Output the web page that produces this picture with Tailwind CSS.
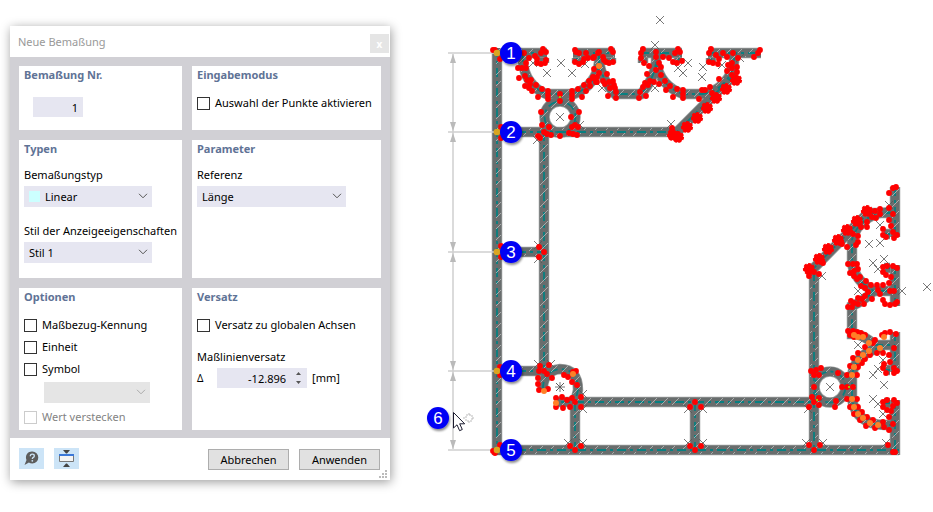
<!DOCTYPE html>
<html lang="de">
<head>
  <meta charset="UTF-8" />
  <meta name="viewport" content="width=device-width, initial-scale=1.0" />
  <title>Neue Bemaßung</title>
  <script src="https://cdn.jsdelivr.net/npm/@tailwindcss/browser@4"></script>
</head>
<body class="bg-white min-h-screen flex items-start font-['Noto_Sans','Open_Sans',sans-serif] text-[11px] leading-4 text-black">

  <!-- DIALOG -->
  <form class="w-[380px] shrink-0 ml-2.5 mt-[26px] mb-8 bg-white shadow-[1px_2px_10px_rgba(0,0,0,0.4)]">

    <header class="flex items-center justify-between h-[31px] pl-2 pr-px">
      <h1 class="text-[#999999]">Neue Bemaßung</h1>
      <button type="button" aria-label="Schließen" class="size-[19px] mt-1 bg-[#e5e5e5] text-white text-[10px] leading-4 font-bold">x</button>
    </header>

    <div class="grid grid-cols-[163fr_189fr] gap-2.5 px-[9px] pt-[9px] pb-2 bg-[#d1d0d5]">

      <section class="bg-white pt-px px-[5px] pb-[13px]">
        <h2 class="font-bold text-[#5f7396]"><label for="nr">Bemaßung Nr.</label></h2>
        <input id="nr" type="text" value="1" class="block w-[50px] h-5 mt-3.5 ml-[9px] pr-[5px] bg-[#e6e6f1] text-right" />
      </section>

      <section class="bg-white pt-px px-[5px]">
        <h2 class="font-bold text-[#5f7396]">Eingabemodus</h2>
        <label class="flex items-center gap-[5px] mt-3 whitespace-nowrap">
          <input type="checkbox" class="appearance-none size-[13px] border border-[#333333] bg-white" />
          Auswahl der Punkte aktivieren
        </label>
      </section>

      <section class="bg-white pt-px px-[5px] pb-[15px]">
        <h2 class="font-bold text-[#5f7396]">Typen</h2>
        <label for="typ" class="block mt-2.5">Bemaßungstyp</label>
        <div class="relative w-32 mt-[3px]">
          <select id="typ" class="block appearance-none w-full h-[21px] pl-[21px] bg-[#e6e6f1]"><option>Linear</option></select>
          <span class="absolute left-[5px] top-[5px] size-[11px] bg-[#ccffff]"></span>
          <svg class="absolute right-1 top-[7px] w-[10px] h-[6px] pointer-events-none" viewBox="0 0 10 6" fill="none" stroke="#555"><path d="M1 .8l4 4 4-4" /></svg>
        </div>
        <label for="stil" class="block mt-4 whitespace-nowrap">Stil der Anzeigeeigenschaften</label>
        <div class="relative w-32 mt-[3px]">
          <select id="stil" class="block appearance-none w-full h-[21px] pl-[5px] bg-[#e6e6f1]"><option>Stil 1</option></select>
          <svg class="absolute right-1 top-[7px] w-[10px] h-[6px] pointer-events-none" viewBox="0 0 10 6" fill="none" stroke="#555"><path d="M1 .8l4 4 4-4" /></svg>
        </div>
      </section>

      <section class="bg-white pt-px px-[5px]">
        <h2 class="font-bold text-[#5f7396]">Parameter</h2>
        <label for="referenz" class="block mt-2.5">Referenz</label>
        <div class="relative w-[149px] mt-[3px]">
          <select id="referenz" class="block appearance-none w-full h-[21px] pl-[5px] bg-[#e6e6f1]"><option>Länge</option></select>
          <svg class="absolute right-1 top-[7px] w-[10px] h-[6px] pointer-events-none" viewBox="0 0 10 6" fill="none" stroke="#555"><path d="M1 .8l4 4 4-4" /></svg>
        </div>
      </section>

      <section class="bg-white pt-px px-[5px] pb-[5px]">
        <h2 class="font-bold text-[#5f7396]">Optionen</h2>
        <div class="flex flex-col gap-1.5 mt-3">
          <label class="flex items-center gap-[5px]">
            <input type="checkbox" class="appearance-none size-[13px] border border-[#333333] bg-white" /> Maßbezug-Kennung
          </label>
          <label class="flex items-center gap-[5px]">
            <input type="checkbox" class="appearance-none size-[13px] border border-[#333333] bg-white" /> Einheit
          </label>
          <label class="flex items-center gap-[5px]">
            <input type="checkbox" class="appearance-none size-[13px] border border-[#333333] bg-white" /> Symbol
          </label>
        </div>
        <div class="relative w-[106px] mt-[5px] ml-5">
          <select aria-label="Symbol" disabled class="block appearance-none w-full h-[21px] bg-[#e5e5e5]"></select>
          <svg class="absolute right-1 top-[7px] w-[10px] h-[6px] pointer-events-none" viewBox="0 0 10 6" fill="none" stroke="#aaa"><path d="M1 .8l4 4 4-4" /></svg>
        </div>
        <label class="flex items-center gap-[5px] mt-1.5 text-[#838383]">
          <input type="checkbox" disabled class="appearance-none size-[13px] border border-[#cccccc] bg-white" /> Wert verstecken
        </label>
      </section>

      <section class="bg-white pt-px px-[5px]">
        <h2 class="font-bold text-[#5f7396]">Versatz</h2>
        <label class="flex items-center gap-[5px] mt-3 whitespace-nowrap">
          <input type="checkbox" class="appearance-none size-[13px] border border-[#333333] bg-white" /> Versatz zu globalen Achsen
        </label>
        <label for="versatz" class="block mt-4">Maßlinienversatz</label>
        <div class="flex items-center mt-[3px]">
          <span class="w-5 text-[10px]">Δ</span>
          <div class="relative w-[90px]">
            <input id="versatz" type="text" value="-12.896" class="block w-full h-5 pr-[21px] bg-[#e6e6f1] text-right" />
            <svg class="absolute right-1.5 top-1 w-[5px] h-3" viewBox="0 0 5 12" fill="#555"><path d="M2.500 0L5 3H0zM2.500 12L5 9H0z" /></svg>
          </div>
          <span class="ml-[5px]">[mm]</span>
        </div>
      </section>
    </div>

    <footer class="relative flex items-start h-[42px] pt-2.5 pl-[9px] pr-2.5">
      <button type="button" aria-label="Hilfe" class="flex items-center justify-center w-[25px] h-[21px] bg-[#cce4f7]">
        <svg class="w-[15px] h-[15px]" viewBox="0 0 15 15">
          <path d="M8.300.5a6 6 0 0 1 0 12q-2 0-3.400-1L.5 14l2-5A6 6 0 0 1 8.300.5z" fill="#5c5c5c" />
          <path d="M6.300 5.200q0-2 2-2t2 1.700q0 .9-1 1.500t-1 1.500" fill="none" stroke="#cce4f7" stroke-width="1.300" />
          <circle cx="8.300" cy="9.800" r=".9" fill="#cce4f7" />
        </svg>
      </button>
      <button type="button" aria-label="Dialog verkleinern" class="flex items-center justify-center w-[25px] h-[21px] ml-2.5 bg-[#cce4f7]">
        <svg class="w-[15px] h-[17px]" viewBox="0 0 15 17">
          <path d="M4 0h7L8 3.500H7zM4 17h7l-3-3.500H7z" fill="#444" />
          <path d="M.5 5.500h14v6H.5z" fill="#f4f4f4" stroke="#777" />
          <path d="M0 4h15v2H0z" fill="#3b78d8" />
        </svg>
      </button>
      <button type="button" class="w-[81px] h-[21px] mt-px ml-auto border border-[#adadad] bg-[#e1e1e1]">Abbrechen</button>
      <button type="submit" class="w-[81px] h-[21px] mt-px ml-2.5 border border-[#adadad] bg-[#e1e1e1]">Anwenden</button>
      <svg class="absolute right-[3px] bottom-0.5 w-2 h-2" viewBox="0 0 8 8" fill="#bbb">
        <path d="M6 0h2v2H6zM3 3h2v2H3zM6 3h2v2H6zM0 6h2v2H0zM3 6h2v2H3zM6 6h2v2H6z" />
      </svg>
    </footer>
  </form>

  <!-- QUERSCHNITT -->
  <svg class="flex-1 min-w-0 ml-2.5" viewBox="400 0 533 512" role="img" aria-label="Querschnitt mit Maßlinien">
    <defs>
      <pattern id="hatch" width="11" height="11" patternUnits="userSpaceOnUse">
        <path d="M1 9l8-8" stroke="#b0b3b3" stroke-width=".9" />
      </pattern>
      <marker id="x" markerUnits="userSpaceOnUse" markerWidth="10" markerHeight="10" refX="5" refY="5">
        <path d="M1 1l8 8M9 1l-8 8" stroke="#555" stroke-width=".8" />
      </marker>
      <marker id="dot" markerUnits="userSpaceOnUse" markerWidth="8" markerHeight="8" refX="4" refY="4">
        <circle cx="4" cy="4" r="2.900" fill="#f00" />
      </marker>
      <marker id="big" markerUnits="userSpaceOnUse" markerWidth="14" markerHeight="14" refX="7" refY="7">
        <circle cx="7" cy="7" r="5.300" fill="#f00" stroke="#f00" stroke-width="1.600" stroke-dasharray="3 1.700" />
      </marker>
      <marker id="orange" markerUnits="userSpaceOnUse" markerWidth="8" markerHeight="8" refX="4" refY="4">
        <circle cx="4" cy="4" r="3" fill="#ff7f27" />
      </marker>
      <marker id="gold" markerUnits="userSpaceOnUse" markerWidth="8" markerHeight="8" refX="4" refY="4">
        <circle cx="4" cy="4" r="3.300" fill="#daa520" />
      </marker>
      <filter id="shadow" x="-30%" y="-30%" width="170%" height="170%">
        <feDropShadow dx="1" dy="2" stdDeviation="1.200" flood-opacity=".45" />
      </filter>
      <g id="profile" fill="none">
        <!-- straight webs -->
        <path d="M497 48V455M544 132V371M497 132H678M497 252H544M497 371H546M497 450H899M575 402V450M575 402H814M695 402V450M814 272V450" />
        <path d="M518 53H547M573 53H615M640 53H682M708 53H761M895 187V237M895 265V306M895 332V372M895 400V455" />
        <path d="M544 58V63M577 58V63M611 58V63M643 58V63M679 58V63M711 58V63M890 234H884M890 268H884M890 370H884M890 403H884" />
        <!-- slots at the top -->
        <path d="M523 53V62A37 37 0 0 0 546 94H574A37 37 0 0 0 599 62V53" />
        <path d="M599 62Q602 80 615 94H641Q654 80 656 62V53" />
        <path d="M656 62Q660 86 683 94H703A37 37 0 0 0 734 62V53M735 74L677 132" />
        <!-- slots on the right -->
        <path d="M810 272L868 213H895M895 213A37 37 0 0 0 852 240V264Q856 282 874 291H895M874 291Q862 302 852 306V334Q864 334 874 345H895" />
        <path d="M884 347Q856 352 852 375V399Q856 424 884 425H895" />
        <!-- screw channels -->
        <circle cx="560" cy="117" r="15.500" />
        <circle cx="830" cy="387" r="15.500" />
        <path d="M543 391Q542 371 560 369Q578 369 578 390L575 402H557" />
      </g>
    </defs>

    <use href="#profile" stroke="#9da1a1" stroke-width="10.500" />
    <use href="#profile" stroke="#686d6d" stroke-width="9" />
    <use href="#profile" stroke="#087f80" stroke-width="1.800" stroke-dasharray="9 4 3 4" />
    <use href="#profile" stroke="url(#hatch)" stroke-width="8" />

    <!-- dimension lines -->
    <path d="M453 54V449M448 53H494M448 132H494M448 252H494M448 371H494M448 450H494" stroke="#d0d0d0" stroke-width="1.500" />
    <path d="M453 54l3 9h-6zM453 131l3-9h-6zM453 133l3 9h-6zM453 251l3-9h-6zM453 253l3 9h-6zM453 370l3-9h-6zM453 372l3 9h-6zM453 449l3-9h-6z" fill="#bababa" />

    <g fill="none" stroke="none">
      <!-- points of the element centres -->
      <path marker-start="url(#x)" marker-mid="url(#x)" marker-end="url(#x)" d="M660 20L655 45L688 63L683 73L703 67L702 77L722 65L561 63L547 73L572 73L560 117L533 63L585 64L537 140L580 125L655 88L671 124L602 88L740 58L678 68" />
      <path marker-start="url(#x)" marker-mid="url(#x)" marker-end="url(#x)" d="M869 244L880 243L884 259L873 263L878 269L927 287L902 291L880 225L858 291L873 375L878 369L884 385L873 399L878 404L883 360L883 414L830 387L858 345L889 205L822 276" />
      <path marker-start="url(#x)" marker-mid="url(#x)" marker-end="url(#x)" d="M538 245L538 259L538 364L551 364L568 443L583 443L583 394L583 409L688 443L703 443L688 409L703 409L806 443L823 443L886 443L808 409L560 387L560 387" />
      <path d="M560 382v10M555 387h10" stroke="#555" stroke-width=".8" />

      <!-- dots, top left slot -->
      <path marker-start="url(#dot)" marker-mid="url(#dot)" marker-end="url(#dot)" d="M493 50L495 50L500 59L501 127L501 138L518 52L524 53L543 49L546 52L541 53L535 56L537 59L529 58L526 63L518 68L522 68L526 68L519 78L525 76L527 80L531 80L525 86L529 88L532 91L536 85L530 84L542 89L538 97L537 63L541 64L545 63L546 60L548 91L548 95L548 99L572 91L572 95L572 99L560 94L560 101" />
      <path marker-start="url(#dot)" marker-mid="url(#dot)" marker-end="url(#dot)" d="M575 50L576 52L579 53L586 53L588 58L575 62L579 64L583 62L584 59L598 53L593 58L594 69L597 77L593 77L589 81L590 86L586 91L584 85L578 89L582 97L597 82L541 112L579 112L571 117L542 125L549 127L544 132L547 134L551 135L538 136L540 138L560 136L569 133L572 127L575 125L578 127L573 134L577 135" />
      <!-- dots, middle and right slot -->
      <path marker-start="url(#dot)" marker-mid="url(#dot)" marker-end="url(#dot)" d="M611 49L613 52L613 62L609 63L604 60L603 57L599 52L606 62L594 57L599 73L607 74L603 81L593 78L605 84L609 82L613 81L614 85L615 88L616 92L616 98L608 96L610 88L596 82L643 49L641 53L641 58L644 63L649 66L656 52L656 57L659 63L656 70L661 67L661 75L647 74L665 81L650 81L645 83L643 87L640 92L639 98L646 96L648 85L654 82L659 84L670 86L666 90L677 89L673 97L683 90L683 94L683 98" />
      <path marker-start="url(#dot)" marker-mid="url(#dot)" marker-end="url(#dot)" d="M675 53L680 52L678 49L663 57L669 58L673 62L677 63L682 61L711 49L709 53L709 62L713 63L718 64L719 59L716 55L723 53L733 53L727 57L738 58L728 65L732 63L737 67L732 68L737 72L727 71L732 75L719 79L710 87L705 90L702 90L699 99L712 93L760 50L758 53L754 57L672 128L671 137" />
      <path marker-start="url(#big)" marker-mid="url(#big)" marker-end="url(#big)" d="M736 80L726 89L716 98L707 108L697 118L687 127L678 137L673 135" />
      <!-- dots, lower webs -->
      <path marker-start="url(#dot)" marker-mid="url(#dot)" marker-end="url(#dot)" d="M501 246L501 257L539 247L544 252L539 257L500 367L500 375L493 451L495 453L500 445L540 366L549 365L544 371L547 374L552 378L539 371L538 378L538 384L539 390L548 389L564 375L568 377L572 382L577 385L573 372L576 371L562 397L567 400L572 398L575 402L581 397L581 407L570 407L563 408L556 407L556 398L570 446L575 450L581 446L690 446L695 450L701 446L690 407L695 402L701 407L809 445L814 450L820 445L888 445L895 452L893 452" />
      <!-- dots, upper right slot -->
      <path marker-start="url(#dot)" marker-mid="url(#dot)" marker-end="url(#dot)" d="M809 276L819 274L814 272L823 263L842 244L847 247L853 234L858 236L858 242L856 245L861 227L867 227L867 222L872 217L876 218L875 211L880 209L880 214L889 208L893 214L889 220L891 226L883 229L883 235L886 237L893 232L897 235L894 238L889 193L893 188L896 187L848 264L853 264L857 264L850 273L854 271L858 269L854 276L857 279L860 277L866 281L861 286L865 288L871 285L868 292L877 285L878 290L883 285L889 283L890 291L894 291L883 267L887 266L893 266L897 268L883 272L886 275L891 277" />
      <path marker-start="url(#dot)" marker-mid="url(#dot)" marker-end="url(#dot)" d="M872 299L865 296L858 298L862 299L851 301L854 303L848 307L852 307L858 304L864 304L883 300L885 304L890 305L895 304L897 302L880 294" />
      <path marker-start="url(#big)" marker-mid="url(#big)" marker-end="url(#big)" d="M809 269L819 259L828 249L838 240L847 230L857 221L867 211" />
      <!-- dots, lower right slot -->
      <path marker-start="url(#dot)" marker-mid="url(#dot)" marker-end="url(#dot)" d="M848 331L853 331L857 332L850 335L854 337L861 333L865 335L885 333L890 332L896 334L882 335L873 343L865 347L875 340L877 353L883 353L870 355L865 359L858 353L853 358L850 366L858 367L847 375L857 375L862 363L847 399L857 399L850 407L858 407L854 414L862 412L860 420L867 417L866 426L875 428L873 420L883 422L884 427L889 430L893 424L889 417L894 348L889 355L890 362L884 364L883 368L886 373L894 368L897 371L894 373" />
      <path marker-start="url(#dot)" marker-mid="url(#dot)" marker-end="url(#dot)" d="M883 402L887 400L894 400L897 403L893 406L883 407L887 410L891 411L811 371L816 370L821 368L814 375L819 375L814 387L812 397L819 398L814 402L809 407L819 405L838 373L836 401L835 407L842 387L847 387L853 387" />
      <path marker-start="url(#orange)" marker-mid="url(#orange)" marker-end="url(#orange)" d="M599 66L544 391L573 374L556 403L854 335L858 337L863 337L869 343L869 351L880 348L884 337L863 355L858 360L854 367L852 375L852 399L854 407L858 414L863 418L870 423L878 425" />
      <path marker-start="url(#gold)" marker-mid="url(#gold)" marker-end="url(#gold)" d="M497 53L497 132L497 252L497 371L497 450" />
    </g>
    <path d="M560 96v2M848 387h2M816 400h2" stroke="#a8c000" stroke-width="2" />

    <!-- numbered badges -->
    <g fill="#0000f5" filter="url(#shadow)">
      <circle cx="511" cy="53" r="11" /><circle cx="511" cy="132" r="11" /><circle cx="511" cy="252" r="11" />
      <circle cx="511" cy="371" r="11" /><circle cx="511" cy="450" r="11" /><circle cx="438" cy="418" r="11" />
    </g>
    <g class="fill-white font-['Liberation_Sans',sans-serif] text-[17px]" text-anchor="middle">
      <text x="511" y="59">1</text>
      <text x="511" y="138">2</text>
      <text x="511" y="258">3</text>
      <text x="511" y="377">4</text>
      <text x="511" y="456">5</text>
      <text x="438" y="424">6</text>
    </g>

    <!-- mouse pointer -->
    <path d="M453.500 412.500v15.500l3.500-3.200 2.600 5.900 2.700-1.200-2.600-5.700h5z" fill="#fff" stroke="#1a1a2e" />
    <path d="M469 413v3M469 421v3M463 418h3M472 418h3M466 415h6v6h-6z" fill="none" stroke="#bbb" stroke-dasharray="2 1" />
  </svg>

</body>
</html>
